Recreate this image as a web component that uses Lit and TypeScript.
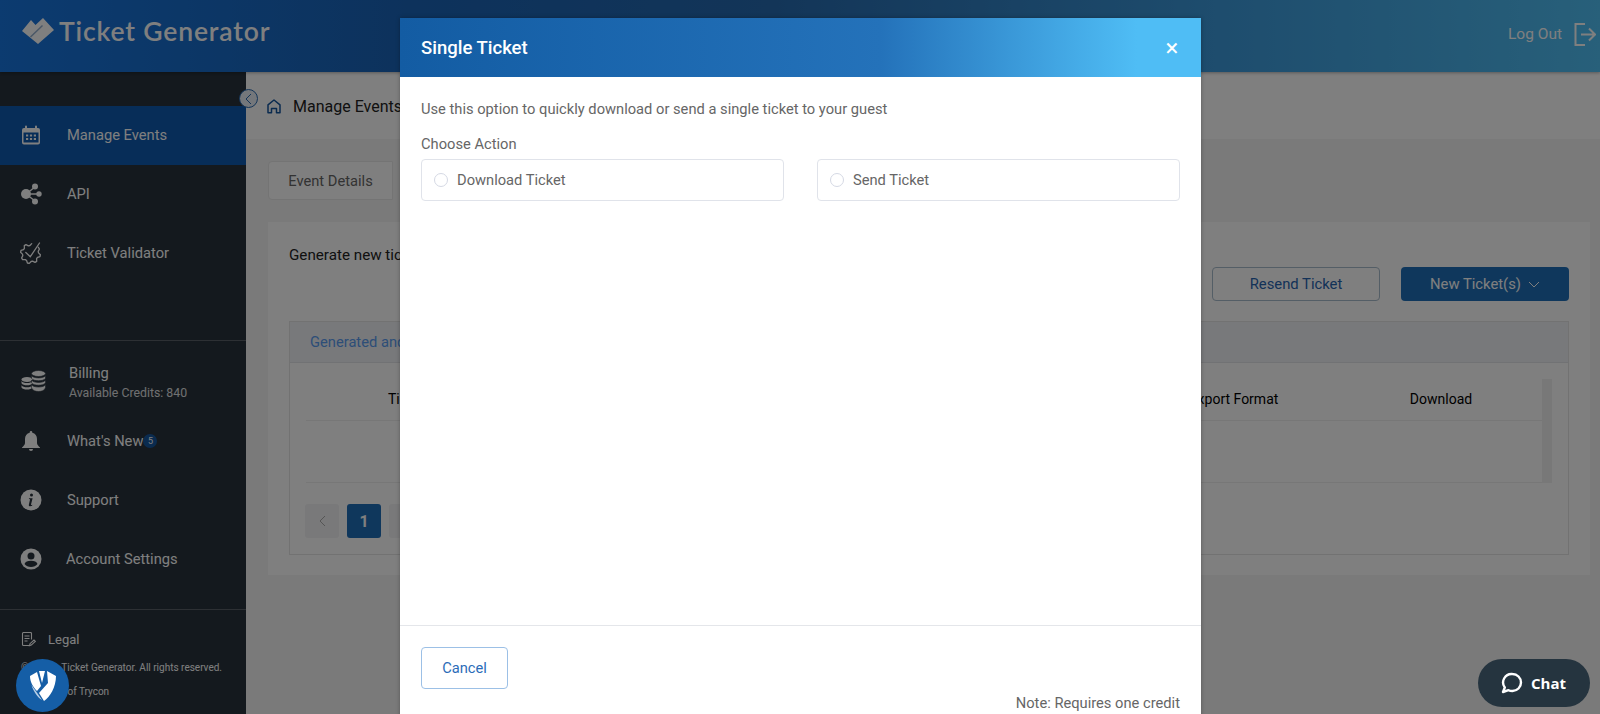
import { LitElement, html, css, svg } from "lit";
import { customElement } from "lit/decorators.js";

const gearPath = (() => {
  const pts: string[] = [];
  const cx = 10.5, cy = 11.5;
  for (let i = 0; i <= 32; i++) {
    const deg = -38 + i * 11.25;
    if (deg > 280) break;
    const tooth = Math.floor(i / 2) % 2 === 0;
    const r = tooth ? 10 : 8;
    const a = (deg * Math.PI) / 180;
    pts.push(`${(cx + r * Math.cos(a)).toFixed(1)} ${(cy + r * Math.sin(a)).toFixed(1)}`);
  }
  return "M" + pts.join("L");
})();

const icons = {
  calendar: svg`<svg width="18" height="20" viewBox="0 0 18 20"><path fill="currentColor" d="M3 1.5a1 1 0 0 1 2 0V3h8V1.500a1 1 0 0 1 2 0V3h1a2 2 0 0 1 2 2v12.500a2 2 0 0 1-2 2H2a2 2 0 0 1-2-2V5a2 2 0 0 1 2-2h1z"/><path fill="#0f5bb0" d="M1.500 7.500h15v10h-15z"/><path fill="currentColor" d="M4 9.500h2.200v2H4zM7.900 9.500h2.200v2H7.900zM11.800 9.500H14v2h-2.200zM4 13h2.200v2H4zM7.900 13h2.200v2H7.900zM11.800 13H14v2h-2.200z"/></svg>`,
  api: svg`<svg width="22" height="22" viewBox="0 0 22 22" fill="currentColor" stroke="currentColor"><path stroke-width="1.500" fill="none" d="M6 11l9-7M6 11h12M6 11l9 7"/><circle cx="6" cy="11" r="5" stroke="none"/><circle cx="15" cy="3.500" r="3" stroke="none"/><circle cx="19" cy="11" r="2.700" stroke="none"/><circle cx="15" cy="18.500" r="3" stroke="none"/></svg>`,
  gear: svg`<svg width="22" height="22" viewBox="0 0 22 22" fill="none" stroke="currentColor" stroke-width="1.300" stroke-linejoin="round" stroke-linecap="round"><path d=${gearPath}/><path d="M5.800 10.500l4.500 4.200L19.500 1"/></svg>`,
  coins: svg`<svg width="25" height="23" viewBox="0 0 25 23" fill="currentColor"><ellipse cx="6" cy="9.500" rx="5.500" ry="2.500"/><path d="M.500 11c1 1.500 3 2 5.500 2s4.500-.500 5.500-2v2.200c-1 1.500-3 2-5.500 2s-4.500-.500-5.500-2zM.500 15.200c1 1.500 3 2 5.500 2s4.500-.500 5.500-2v2.200c-1 1.500-3 2-5.500 2s-4.500-.500-5.500-2z"/><ellipse cx="17.500" cy="3.500" rx="7" ry="3" stroke="#28323c" stroke-width=".6"/><path stroke="#28323c" stroke-width=".6" d="M10.500 5.500c1 1.800 4 2.400 7 2.400s6-.600 7-2.400v2.800c-1 1.800-4 2.400-7 2.400s-6-.600-7-2.400zM10.500 10c1 1.800 4 2.400 7 2.400s6-.600 7-2.400v2.800c-1 1.800-4 2.400-7 2.400s-6-.600-7-2.400zM10.500 14.600c1 1.800 4 2.400 7 2.400s6-.600 7-2.400V17.800c-1 2.800-4 3.700-7 3.700s-6-.900-7-3.700z"/></svg>`,
  bell: svg`<svg width="18" height="20" viewBox="0 0 18 20" fill="currentColor"><path d="M9 0a1.300 1.300 0 0 1 1.300 1.300v.500C13.300 2.500 15 5 15 8v4c0 1.500 1.500 3 3 4.500v.500H0v-.500C1.500 15 3 13.500 3 12V8c0-3 1.700-5.500 4.700-6.200v-.500A1.300 1.300 0 0 1 9 0zM7 18h4a2 2 0 0 1-4 0z"/></svg>`,
  info: svg`<svg width="22" height="22" viewBox="0 0 22 22"><circle cx="11" cy="11" r="10.500" fill="currentColor"/><path fill="#28323c" d="M11.500 4.500a1.500 1.500 0 1 1 0 3 1.500 1.500 0 0 1 0-3zM9 9.300h3.600L11 15.600c-.100.500.300.500 1.300.200l-.200.900c-1 .6-3.500 1-3.300-.800l1.300-5.600-1.200-.200z"/></svg>`,
  person: svg`<svg width="22" height="22" viewBox="0 0 22 22"><circle cx="11" cy="11" r="10.500" fill="currentColor"/><circle cx="11" cy="8" r="3.500" fill="#28323c"/><path fill="#28323c" d="M4.500 16c.800-2.200 3-3.200 6.500-3.200s5.700 1 6.500 3.200c-1.500 2-3.800 3-6.500 3s-5-1-6.500-3z"/></svg>`,
  legal: svg`<svg width="15" height="15" viewBox="0 0 15 15" fill="none" stroke="currentColor" stroke-width="1.100"><path d="M8 13.500H2.500a1 1 0 0 1-1-1v-11a1 1 0 0 1 1-1h7a1 1 0 0 1 1 1v6"/><path d="M3.500 4h5M3.500 6.500h5M3.500 9h3"/><path d="M8.500 13.700l.5-2 4-3.700 1.300 1.300-4 3.800z"/></svg>`,
  logout: svg`<svg width="22" height="23" viewBox="0 0 22 23" fill="none" stroke="currentColor" stroke-width="2"><path d="M11 1H1.500v21H11"/><path d="M7 11.500h14M15 5.500l6 6-6 6"/></svg>`,
  home: svg`<svg width="14" height="15" viewBox="0 0 14 15" fill="none" stroke="currentColor" stroke-width="1.500" stroke-linejoin="round"><path d="M1 13.800V5.800L7 1l6 4.800v8H9.500V9.500h-5v4.300z"/></svg>`,
  chat: svg`<svg width="22" height="22" viewBox="0 0 22 22" fill="none" stroke="currentColor" stroke-width="2.400" stroke-linejoin="round"><path d="M11.500 2a8.500 8.500 0 0 1 0 17c-2 0-3-.300-4-.800L2 20l1.800-4.500A8.500 8.500 0 0 1 11.500 2z"/></svg>`,
  shield: svg`<svg width="26" height="30" viewBox="0 0 26 30"><path fill="#fff" d="M0 5l7-4 4 14-4 5C3 16 0 11 0 5zM9 0h6l-3 12zM17 0l9 5c0 11-6 21-12 25l-5-8 9-10z"/><path fill="#b9cfe6" d="M1.500 14l5 7 5.500 8C8 27 3 20 1.500 14z"/></svg>`,
};

@customElement("app-root")
export class AppRoot extends LitElement {
  static styles = css`
    :host { display: block; position: relative; width: 100%; height: 714px; overflow: hidden; font-family: Roboto, "Liberation Sans", sans-serif; background: #f5f5f5; color: #222; }
    * { box-sizing: border-box; }
    svg { display: block; }
    .page { display: flex; flex-direction: column; height: 714px; }
    .top { flex: none; height: 72px; display: flex; align-items: center; justify-content: space-between; padding: 0 4px 0 22px; color: #fff; background: linear-gradient(90deg, #1876e0 0%, #1a64b8 26%, #266ab0 48%, #3c9adc 76%, #50c0f5 100%); box-shadow: 0 1px 3px rgba(0,0,0,.3); position: relative; z-index: 1; }
    .brand { display: flex; align-items: center; gap: 5px; height: 72px; padding-bottom: 10px; }
    .brand span { font: 600 26.500px Lato, "Open Sans", sans-serif; letter-spacing: .85px; color: #fff; }
    .logout { display: flex; align-items: center; gap: 12px; padding-bottom: 4px; font-size: 15.500px; }
    .body { flex: 1; display: flex; min-height: 0; }
    .side { flex: none; width: 246px; background: #28323c; color: #fff; padding-top: 34px; display: flex; flex-direction: column; }
    .row { height: 59px; display: flex; align-items: center; padding: 0 0 2px 20px; font-size: 14.700px; }
    .row.on { background: #0f5bb0; }
    .ic { flex: none; width: 22px; display: flex; justify-content: center; margin-right: 25px; }
    .ic.wide { margin-right: 23px; width: 26px; }
    .ic.tight { margin-right: 24px; }
    .billing { height: 62px; padding-bottom: 0; }
    .billing > div { padding-top: 1px; }
    .billing small { display: block; font-size: 12.300px; margin-top: 4px; opacity: .85; }
    .badge { display: inline-flex; width: 14px; height: 14px; border-radius: 50%; background: #15569f; font-size: 9px; align-items: center; justify-content: center; vertical-align: 1px; }
    .rule { border-top: 1px solid #5a6068; }
    .r1 { margin-top: 57px; margin-bottom: 9px; }
    .r2 { margin-top: 20px; }
    .foot { padding: 22px 0 0 21px; font-size: 10px; }
    .legal { display: flex; align-items: center; gap: 12px; font-size: 13px; margin-bottom: 14px; }
    .foot p { margin: 0 0 10px; line-height: 14px; }
    .main { flex: 1; display: flex; flex-direction: column; min-width: 0; }
    .crumb { flex: none; height: 67px; background: #fff; display: flex; align-items: center; gap: 12px; padding: 2px 0 0 21px; font-size: 16px; color: #15569f; }
    .crumb span { color: #222; }
    .content { flex: 1; padding: 22px 10px 0 22px; }
    .tabs { display: flex; height: 39px; }
    .tab { width: 125px; display: flex; align-items: center; justify-content: center; background: #fff; border: 1px solid #e8e8e8; border-radius: 4px 0 0 4px; font-size: 14.700px; color: #666; }
    .card { margin-top: 22px; height: 353px; background: #fff; padding: 21px 21px 0; }
    .lead { font-size: 15.200px; height: 24px; line-height: 24px; }
    .actions { display: flex; justify-content: flex-end; gap: 21px; }
    .btn { width: 168px; height: 34px; border-radius: 4px; display: flex; align-items: center; justify-content: center; gap: 7px; font-size: 14.800px; }
    .ghost { border: 1px solid #a9bccc; color: #2764b0; }
    .solid { background: #1f6fb8; color: #fff; }
    .box { margin-top: 20px; height: 234px; border: 1px solid #e4e4e4; }
    .boxhead { height: 41px; background: #f0f2f6; border-bottom: 1px solid #e2e4e8; padding: 0 20px; display: flex; align-items: center; font-size: 14.700px; color: #5a9cf0; }
    .tbl { padding: 16px 16px 0; position: relative; }
    .th { display: grid; grid-template-columns: 235px 1fr 212px 202px; margin-right: 10px; height: 42px; padding-bottom: 2px; align-items: center; text-align: center; font-size: 14px; color: #000; border-bottom: 1px solid #eee; }
    .tr { height: 62px; margin-right: 10px; border-bottom: 1px solid #eee; }
    .sb { position: absolute; right: 16px; top: 16px; width: 10px; height: 104px; background: #f1f1f1; }
    .pager { display: flex; gap: 8px; padding: 21px 0 0 15px; }
    .pg { width: 34px; height: 34px; border-radius: 3px; background: #f3f3f5; display: flex; align-items: center; justify-content: center; color: #aaa; font-size: 15px; }
    .pg.cur { background: #1f6fb8; color: #fff; font-weight: 700; font-size: 16px; }
    .collapse { position: absolute; left: 239px; top: 89px; width: 19px; height: 19px; border-radius: 50%; background: #e8eef6; border: 1px solid #2a6ab0; display: flex; align-items: center; justify-content: center; color: #2a6ab0; z-index: 2; }
    .shade { position: absolute; inset: 0; background: rgba(0,0,0,.5); z-index: 3; }
    .modal { position: absolute; left: 400px; top: 18px; width: 801px; height: 740px; background: #fff; z-index: 4; display: flex; flex-direction: column; box-shadow: 0 0 4px rgba(0,0,0,.3); color: #666; font-size: 14.700px; }
    .mhead { flex: none; height: 59px; display: flex; align-items: center; justify-content: space-between; padding: 0 21px; color: #fff; font-size: 18.500px; font-weight: 500; background: linear-gradient(90deg, #135ca3 0%, #2472ba 60%, #4fbdf5 92%, #4fbdf5 100%); }
    .x { font-size: 24px; font-weight: 400; line-height: 1; width: 14px; display: flex; justify-content: center; padding-right: 2px; }
    .mbody { flex: none; height: 549px; padding: 23px 21px 0; border-bottom: 1px solid #e4e6ea; }
    .mbody p { margin: 0; line-height: 18px; }
    .mbody .ch { margin-top: 17px; }
    .opts { display: grid; grid-template-columns: 363px 363px; column-gap: 33px; margin-top: 6px; }
    .opt { height: 42px; border: 1px solid #e0e3ea; border-radius: 4px; display: flex; align-items: center; gap: 9px; padding-left: 12px; }
    .radio { width: 14px; height: 14px; border-radius: 50%; border: 1px solid #d5d9e4; }
    .mfoot { padding: 21px 21px 0; position: relative; flex: 1; }
    .cancel { width: 87px; height: 42px; border: 1px solid #9cc0e6; border-radius: 4px; display: flex; align-items: center; justify-content: center; color: #2b6cb8; }
    .note { text-align: right; width: 759px; margin-top: 5px; line-height: 18px; }
    .chat { position: absolute; left: 1478px; top: 659px; width: 112px; height: 48px; border-radius: 24px; background: #25343f; color: #fff; z-index: 5; display: flex; align-items: center; gap: 8px; padding-left: 23px; font: 700 15px "Open Sans", sans-serif; }
    .trust { position: absolute; left: 16px; top: 659px; width: 53px; height: 53px; border-radius: 50%; background: #155ea6; z-index: 5; display: flex; align-items: center; justify-content: center; }
  `;

  render() {
    return html`
      <div class="page">
        <header class="top">
          <div class="brand">
            <svg width="32" height="27" viewBox="0 0 32 27"><path fill="#fff" d="M0 13L9 2l4.500 5L21 0l11 12L16 26z"/><path fill="#0d4a8f" opacity=".45" d="M8 18.500L20 7l1 1L9 19.500z"/></svg>
            <span>Ticket Generator</span>
          </div>
          <div class="logout"><span>Log Out</span>${icons.logout}</div>
        </header>
        <div class="body">
          <nav class="side">
            <div class="row on"><span class="ic">${icons.calendar}</span>Manage Events</div>
            <div class="row"><span class="ic">${icons.api}</span>API</div>
            <div class="row"><span class="ic">${icons.gear}</span>Ticket Validator</div>
            <div class="rule r1"></div>
            <div class="row billing"><span class="ic wide">${icons.coins}</span><div>Billing<small>Available Credits: 840</small></div></div>
            <div class="row"><span class="ic">${icons.bell}</span>What's New<span class="badge">5</span></div>
            <div class="row"><span class="ic">${icons.info}</span>Support</div>
            <div class="row"><span class="ic tight">${icons.person}</span>Account Settings</div>
            <div class="rule r2"></div>
            <div class="foot">
              <div class="legal">${icons.legal}Legal</div>
              <p>© 2023 - Ticket Generator. All rights reserved.</p>
              <p>A Product of Trycon</p>
            </div>
          </nav>
          <main class="main">
            <div class="crumb">${icons.home}<span>Manage Events</span></div>
            <div class="content">
              <div class="tabs"><div class="tab">Event Details</div></div>
              <section class="card">
                <div class="lead">Generate new tickets</div>
                <div class="actions">
                  <div class="btn ghost">Resend Ticket</div>
                  <div class="btn solid">New Ticket(s)
                    <svg width="12" height="7" viewBox="0 0 12 7" fill="none" stroke="currentColor"><path d="M1 1l5 5 5-5"/></svg>
                  </div>
                </div>
                <div class="box">
                  <div class="boxhead">Generated and Sent</div>
                  <div class="tbl">
                    <div class="th"><span>Ticket Type</span><span></span><span>Export Format</span><span>Download</span></div>
                    <div class="tr"></div>
                    <div class="sb"></div>
                  </div>
                  <div class="pager">
                    <div class="pg"><svg width="7" height="12" viewBox="0 0 7 12" fill="none" stroke="currentColor"><path d="M6 1L1 6l5 5"/></svg></div>
                    <div class="pg cur">1</div>
                    <div class="pg"></div>
                  </div>
                </div>
              </section>
            </div>
          </main>
        </div>
      </div>
      <div class="collapse"><svg width="7" height="12" viewBox="0 0 7 12" fill="none" stroke="currentColor"><path d="M6 1L1 6l5 5"/></svg></div>
      <div class="shade"></div>
      <div class="modal">
        <div class="mhead"><span>Single Ticket</span><span class="x">×</span></div>
        <div class="mbody">
          <p>Use this option to quickly download or send a single ticket to your guest</p>
          <p class="ch">Choose Action</p>
          <div class="opts">
            <div class="opt"><span class="radio"></span>Download Ticket</div>
            <div class="opt"><span class="radio"></span>Send Ticket</div>
          </div>
        </div>
        <div class="mfoot">
          <div class="cancel">Cancel</div>
          <div class="note">Note: Requires one credit</div>
        </div>
      </div>
      <div class="trust">${icons.shield}</div>
      <div class="chat">${icons.chat}<span>Chat</span></div>
    `;
  }
}
